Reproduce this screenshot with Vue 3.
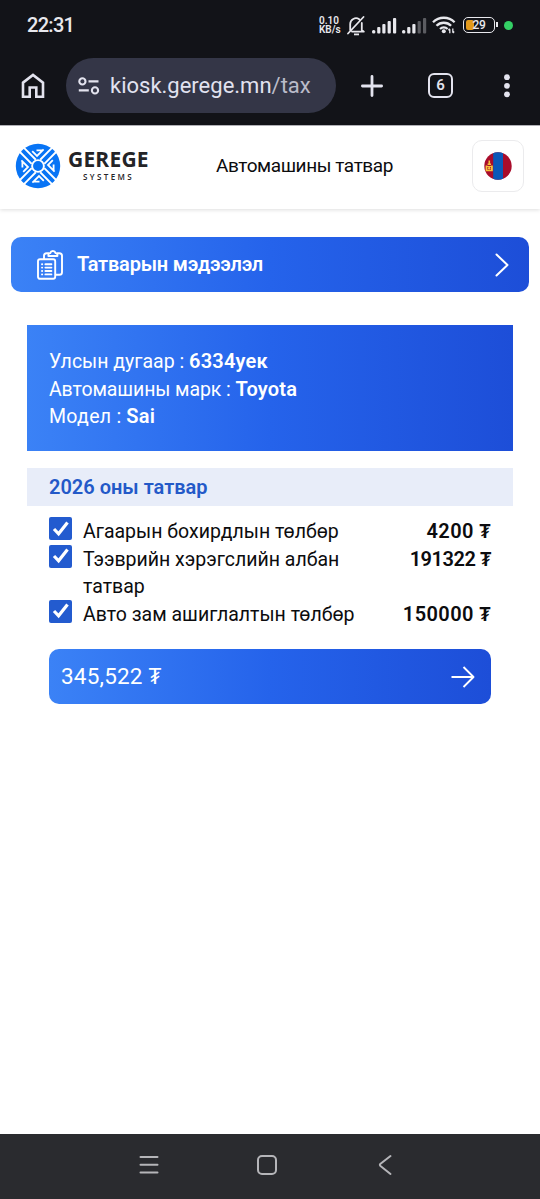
<script setup>
const taxes = [
  { id: 'air', name: 'Агаарын бохирдлын төлбөр', amount: '4200 ₮' },
  { id: 'vehicle', name: 'Тээврийн хэрэгслийн албан татвар', amount: '191322 ₮' },
  { id: 'road', name: 'Авто зам ашиглалтын төлбөр', amount: '150000 ₮' },
]
const car = [
  { label: 'Улсын дугаар :', value: '6334уек', cls: 'plate' },
  { label: 'Автомашины марк :', value: 'Toyota', cls: 'mark' },
  { label: 'Модел :', value: 'Sai', cls: 'model' },
]
const quarters = [0, 90, 180, 270]
</script>

<template>
  <div class="screen">
    <div class="status">
      <span class="clock">22:31</span>
      <div class="indicators">
        <div class="rate"><span>0.10</span><span>KB/s</span></div>
        <svg class="bell" width="18" height="20" viewBox="0 0 18 20" fill="none" stroke="#e8e8ed" stroke-width="1.8">
          <path d="M3.2 14V8a5.8 5.8 0 0 1 9-4.8M14.8 7v7l2 1.6H5M1 17.5 16.5 1" stroke-linecap="round" stroke-linejoin="round" />
          <path d="M7 18.4h5" />
        </svg>
        <svg class="signal" width="25" height="17" viewBox="0 0 25 17" fill="#e8e8ed">
          <rect x="0" y="13" width="3.4" height="3.4" rx="1.5" /><rect x="5.2" y="10" width="3.2" height="6.4" rx="1" /><rect x="10.3" y="7" width="3.2" height="9.4" rx="1" /><rect x="15.6" y="4" width="3.2" height="12.4" rx="1" /><rect x="21" y="1" width="3.2" height="15.4" rx="1" />
        </svg>
        <svg class="signal second" width="25" height="17" viewBox="0 0 25 17" fill="#e8e8ed">
          <rect x="0" y="13" width="3.4" height="3.4" rx="1.5" /><rect x="5.2" y="10" width="3.2" height="6.4" rx="1" /><rect x="10.3" y="7" width="3.2" height="9.4" rx="1" /><g fill="#5b5c61"><rect x="15.6" y="4" width="3.2" height="12.4" rx="1" /><rect x="21" y="1" width="3.2" height="15.4" rx="1" /></g>
        </svg>
        <svg class="wifi" width="24" height="18" viewBox="0 0 24 18" fill="none" stroke="#e8e8ed" stroke-width="2.3">
          <path d="M1 6.2a15.3 15.3 0 0 1 21.6 0M4.5 9.8a10.3 10.3 0 0 1 14.6 0M8 13a5.6 5.6 0 0 1 7.6 0" />
          <circle cx="11.8" cy="15.2" r="2" fill="#e8e8ed" stroke="none" />
          <path d="M17.8 17.2v-4M20.8 12.4v4M16.4 14.2l1.4-1.5M22.2 15.5l-1.4 1.5" stroke-width="1.3" />
        </svg>
        <div class="battery"><i></i><b>29</b></div>
        <em class="privacy"></em>
      </div>
    </div>

    <div class="toolbar">
      <svg class="home" width="24" height="26" viewBox="0 0 24 26" fill="none" stroke="#e3e3ee" stroke-width="2.6">
        <path d="M2 9.6 12 2l10 7.6v14.2h-6.7v-9.3H8.7v9.3H2z" />
      </svg>
      <div class="address">
        <svg width="22" height="18" viewBox="0 0 22 18" fill="none" stroke="#e3e3ee" stroke-width="2.1">
          <circle cx="4.4" cy="4.4" r="3.1" /><path d="M10.5 4.4H20.5M.8 13.4h10" /><circle cx="17" cy="13.4" r="3.1" />
        </svg>
        <span>kiosk.gerege.mn<small>/tax</small></span>
      </div>
      <svg class="plus" width="22" height="22" viewBox="0 0 22 22" stroke="#e3e3ee" stroke-width="2.8" stroke-linecap="round"><path d="M11 1.4v19.2M1.4 11h19.2" /></svg>
      <span class="tabs">6</span>
      <svg class="more" width="6" height="24" viewBox="0 0 6 24" fill="#e3e3ee"><circle cx="3" cy="3.2" r="2.9" /><circle cx="3" cy="11.8" r="2.9" /><circle cx="3" cy="20.3" r="2.9" /></svg>
    </div>

    <header class="header">
      <svg class="emblem" width="46" height="46" viewBox="0 0 46 46">
        <circle cx="23" cy="23" r="22.2" fill="#0874f5" />
        <g fill="none" stroke="#fff" stroke-width="1.9">
          <g v-for="angle in quarters" :key="angle" :transform="`rotate(${angle} 23 23)`">
            <path d="M20.1 0V17M25.9 0V17" transform="rotate(45 23 23)" />
            <path d="M17.2 8.200 22 13 28.600 6.400M27.600 7.400H21.500" stroke-width="1.8" />
          </g>
          <circle cx="23" cy="23" r="5.9" />
        </g>
      </svg>
      <div class="brand"><strong>GEREGE</strong><span>SYSTEMS</span></div>
      <h1>Автомашины татвар</h1>
      <div class="language">
        <svg width="28" height="28" viewBox="0 0 28 28">
          <clipPath id="round-flag"><circle cx="14" cy="14" r="13.7" /></clipPath>
          <g clip-path="url(#round-flag)">
            <path fill="#a90c2b" d="M0 0h28v28H0z" /><path fill="#0b58b8" d="M9.2 0H19v28H9.2z" />
            <path fill="#f5c33b" d="M4.5 8.500h1.600v3H4.500zM3.600 11.500H7V13H3.600zM1.600 13.600h1.800v5.600H1.600zM7 13.600h1.800v5.600H7zM3.400 14h3.600v1H3.400zM3.400 17.800h3.600v1.400H3.400z" /><circle cx="5.200" cy="16.300" r="1.200" fill="#f5c33b" />
          </g>
        </svg>
      </div>
    </header>

    <main>
      <div class="banner">
        <svg width="26" height="30" viewBox="0 0 26 30" fill="none" stroke="#fff" stroke-width="1.9" stroke-linejoin="round" stroke-linecap="round">
          <path d="M7 9V5.8A2.6 2.6 0 0 1 9.6 3.2H11.5M20.4 3.2h2A2.6 2.6 0 0 1 25 5.8V22.2A2.6 2.6 0 0 1 22.4 24.8H18.8" />
          <path d="M11.4 4.8c0-1 .7-1.7 1.8-1.7.4-1.3 1.3-2.1 2.7-2.1s2.3.8 2.7 2.1c1.1 0 1.8.7 1.8 1.7v1.2h-9z" />
          <rect x="1" y="9.2" width="17.2" height="19.6" rx="2" />
          <path d="M5 14.2h.2M8.4 14.2h6M5 17.6h.2M8.4 17.6h6M5 21h.2M8.4 21h6M5 24.4h.2M8.4 24.4h6" />
        </svg>
        <strong>Татварын мэдээлэл</strong>
        <svg class="chevron" width="14" height="24" viewBox="0 0 14 24" fill="none" stroke="#fff" stroke-width="2" stroke-linecap="round" stroke-linejoin="round"><path d="m1.5 1.5 11 10.5-11 10.5" /></svg>
      </div>

      <section class="content">
        <div class="car">
          <p v-for="row in car" :key="row.label"><span :class="row.cls">{{ row.label }}</span> <b>{{ row.value }}</b></p>
        </div>
        <h2><span>2026 оны татвар</span></h2>
        <div class="taxes">
          <label v-for="tax in taxes" :key="tax.id" :class="tax.id">
            <i class="box"><svg width="18" height="16" viewBox="0 0 18 16" fill="none" stroke="#fff" stroke-width="3.2"><path d="m2 8 4.6 4.8L15.5 1.5" /></svg></i>
            <span>{{ tax.name }}</span>
            <b>{{ tax.amount }}</b>
          </label>
        </div>
        <div class="pay">
          <span>345,522 ₮</span>
          <svg width="24" height="22" viewBox="0 0 24 22" fill="none" stroke="#fff" stroke-width="1.9" stroke-linejoin="round"><path d="M.5 11h22M12.5 1l10 10-10 10" /></svg>
        </div>
      </section>
    </main>

    <nav>
      <svg width="20" height="20" viewBox="0 0 20 20" stroke="#b5b5b9" stroke-width="2" stroke-linecap="round"><path d="M1.5 2h17M1.5 9.7h17M1.5 17.4h17" /></svg>
      <svg width="22" height="22" viewBox="0 0 22 22" fill="none" stroke="#b5b5b9" stroke-width="2"><rect x="2" y="2" width="18" height="18" rx="4" /></svg>
      <svg width="14" height="22" viewBox="0 0 14 22" fill="none" stroke="#b5b5b9" stroke-width="2" stroke-linecap="round" stroke-linejoin="round"><path d="M12.5 2 2.5 9.8q-1.3 1 0 2.2L12.5 20" /></svg>
    </nav>
  </div>
</template>

<style>
body { background: #fff; }
</style>

<style scoped>
* { box-sizing: border-box; margin: 0; }
.screen { width: 540px; height: 1199px; display: flex; flex-direction: column; background: #fff; color: #0c0c0e; font: 20px/27.5px Roboto, "Noto Sans", sans-serif; overflow: hidden; white-space: nowrap; }
svg { display: block; flex: none; }
.status { height: 50px; background: #121318; display: flex; align-items: center; justify-content: space-between; padding: 0 27px; color: #e8e8ed; }
.clock { font-weight: 500; line-height: 24px; letter-spacing: -.7px; }
.indicators { display: flex; align-items: center; width: 194px; flex: none; }
.rate { width: 28px; display: flex; flex-direction: column; font-size: 10px; font-weight: 600; line-height: 9px; }
.bell { margin-top: 1px; }
.signal { margin-left: 7px; margin-top: 1px; }
.signal.second { margin-left: 5px; }
.wifi { margin-left: 5px; }
.battery { margin-left: 7px; width: 32px; height: 16px; border: 1.5px solid #e8e8ed; border-radius: 5px; position: relative; display: flex; align-items: center; justify-content: center; flex: none; }
.battery i { position: absolute; left: 2px; top: 2px; bottom: 2px; width: 8px; background: #e39a1c; border-radius: 2px; }
.battery::after { content: ""; position: absolute; right: -4px; top: 4px; width: 2px; height: 5px; background: #e8e8ed; }
.battery b { position: relative; font-size: 12px; font-weight: 500; line-height: 13px; letter-spacing: -.2px; }
.privacy { width: 9px; height: 9px; border-radius: 50%; background: #34d065; margin-left: 9px; flex: none; }
.toolbar { height: 75px; background: #121318; display: flex; align-items: center; padding: 0 0 4px 21px; }
.address { margin-left: 21px; width: 270px; height: 55px; border-radius: 28px; background: #343647; display: flex; align-items: center; padding-left: 12px; color: #e1e2f0; flex: none; }
.address span { margin-left: 10px; font-size: 22px; line-height: 30px; }
.address small { font-size: 22px; color: #babbc9; }
.plus { margin-left: 25px; }
.tabs { margin-left: 45px; width: 25px; height: 25px; border: 2.6px solid #e3e3ee; border-radius: 6px; color: #e3e3ee; font-size: 15px; font-weight: 600; line-height: 21px; text-align: center; flex: none; }
.more { margin-left: 51px; }
.header { height: 84px; border-top: 1px solid #b0b0b6; box-shadow: 0 1px 4px #0002; display: flex; align-items: center; padding: 0 16px 4px 15px; flex: none; }
.brand { width: 80px; margin-left: 7px; display: flex; flex-direction: column; color: #242427; }
.brand strong { font: 700 21px/20px "Open Sans", sans-serif; letter-spacing: .2px; }
.brand span { font: 600 8px/11px "Open Sans", sans-serif; letter-spacing: 2.4px; margin: 2px 0 0 15px; }
.header h1 { font-weight: 400; font-size: 19px; line-height: 28px; letter-spacing: -.42px; margin-left: 68px; }
.language { width: 52px; height: 52px; border: 1.5px solid #ebebed; border-radius: 10px; display: flex; align-items: center; justify-content: center; margin-left: auto; flex: none; }
main { flex: 1; padding: 28px 11px 0; }
.banner { height: 55px; border-radius: 10px; background: linear-gradient(90deg, #3b82f6, #2563eb 50%, #1d4ed8); display: flex; align-items: center; padding: 0 20px 0 26px; color: #fff; }
.banner strong { font-weight: 600; letter-spacing: -.2px; margin-left: 14px; }
.chevron { margin-left: auto; }
.content { margin: 33px 16px 0; }
.car { height: 126px; background: linear-gradient(90deg, #3b82f6, #2563eb 50%, #1d4ed8); color: #fff; padding: 23px 22px 0; font-size: 19.5px; }
.car p { height: 27.5px; }
.car b { font-size: 20px; font-weight: 600; letter-spacing: .2px; }
.mark { letter-spacing: -.1px; }
.model { letter-spacing: .3px; }
h2 { margin-top: 17px; height: 38px; padding-left: 22px; background: #e8edf9; color: #2359c8; font-size: 20px; font-weight: 600; line-height: 39px; }
.taxes { margin: 11px 22px 0; }
.taxes label { display: flex; align-items: flex-start; }
.box { width: 23px; height: 23px; border-radius: 2px; background: #235bcf; flex: none; display: flex; align-items: center; justify-content: center; }
.taxes span { margin: 1px 0 -1px 11px; width: 276px; white-space: normal; font-size: 19.5px; }
.taxes b { margin: 1px 0 -1px auto; font-weight: 600; letter-spacing: .4px; }
.taxes .vehicle b { letter-spacing: -.45px; }
.pay { margin: 22px 22px 0; height: 55px; border-radius: 10px; background: linear-gradient(90deg, #3b82f6, #2563eb 50%, #1d4ed8); color: #fff; display: flex; align-items: center; justify-content: space-between; padding: 0 16px 0 12px; font-size: 22.5px; letter-spacing: .2px; }
nav { height: 65px; background: #2a2b2f; display: flex; align-items: center; padding: 0 0 4px 139px; flex: none; }
nav svg:nth-child(2) { margin-left: 97px; }
nav svg:nth-child(3) { margin-left: 100px; }
</style>
